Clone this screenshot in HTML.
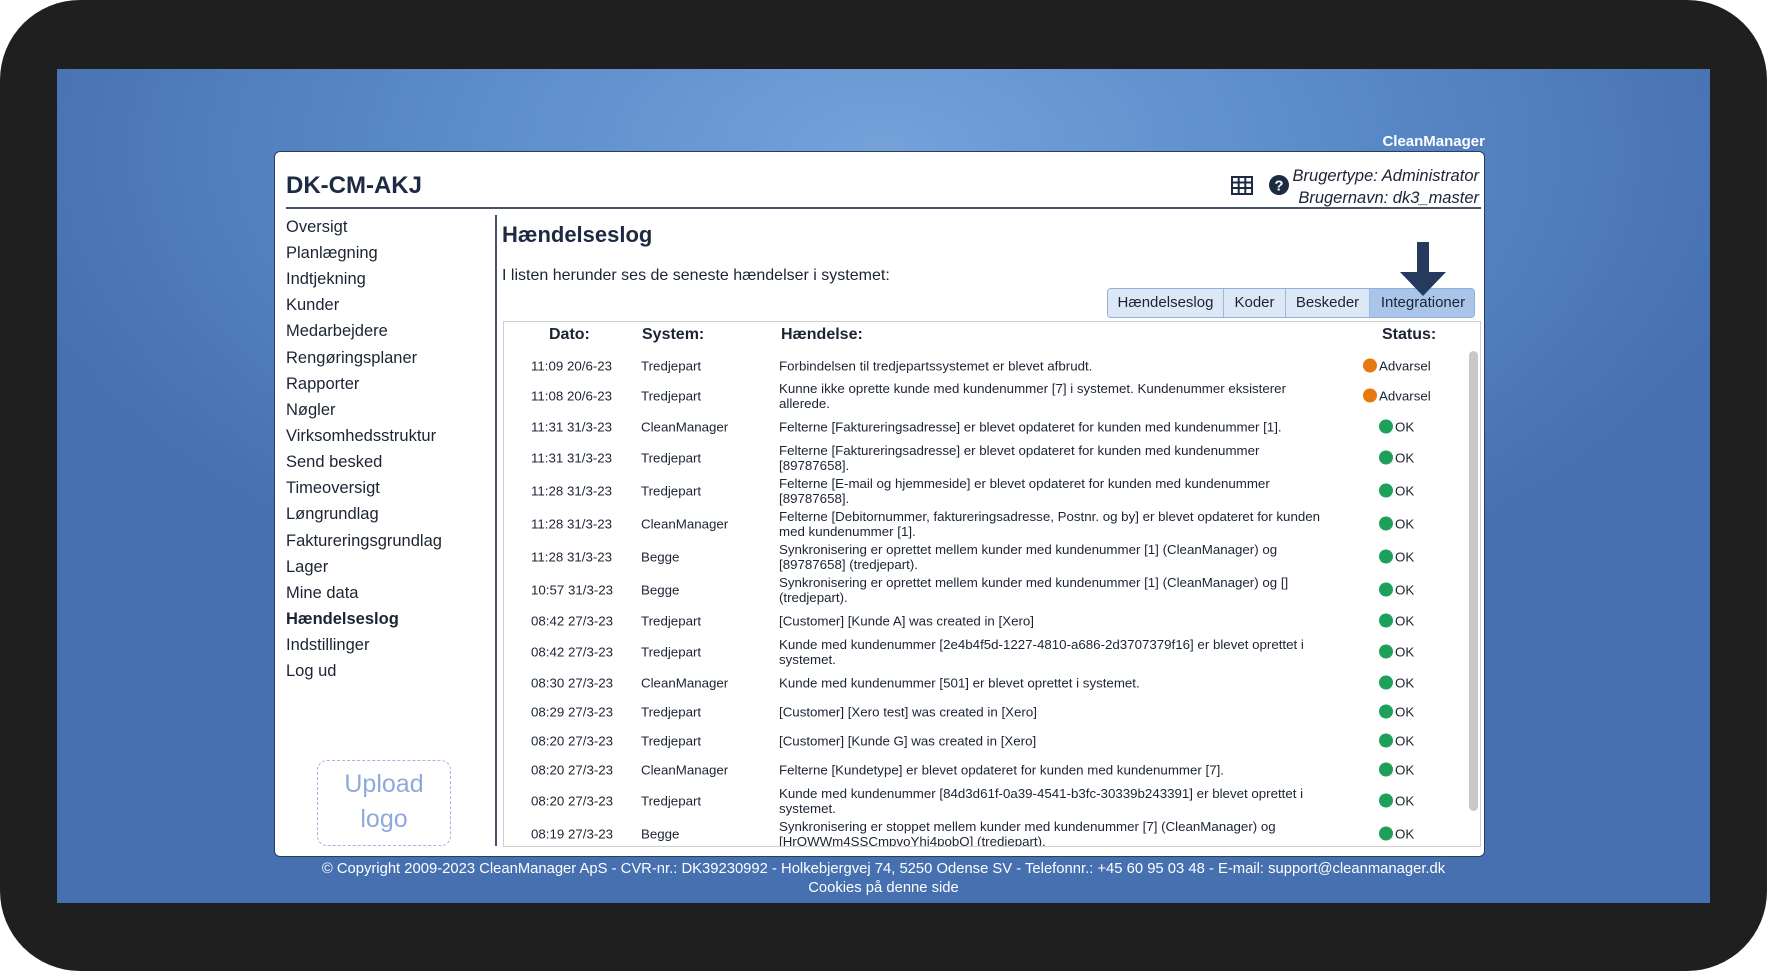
<!DOCTYPE html>
<html><head><meta charset="utf-8"><style>
*{margin:0;padding:0;box-sizing:border-box}
body{width:1767px;height:971px;background:#fff;position:relative;overflow:hidden;font-family:"Liberation Sans",sans-serif;color:#1c2433}
.frame{position:absolute;left:0;top:0;width:1767px;height:971px;background:#1f1f1f;border-radius:80px}
.blue{position:absolute;left:57px;top:69px;width:1653px;height:834px;background:radial-gradient(ellipse 900px 500px at 50% 10%,#74a2d9 0%,#5d8dcb 45%,#4670b0 100%);overflow:hidden}
.panel{position:absolute;left:274px;top:151px;width:1211px;height:706px;background:#fff;border-radius:6px;border:1px solid #2b3d5c}
.abs{position:absolute}
.menu div{position:absolute;left:11px;font-size:16.5px;color:#1c2433}
.row{position:absolute;left:0;width:977px;font-size:13.3px;color:#1c2433}
.row span{position:absolute;transform:translateY(-50%)}
.d{left:27px}.s{left:137px}.e{left:275px;width:556px;line-height:15px}
.st{left:875px;white-space:nowrap}
.st.w{left:859px}
.dot{display:inline-block;width:14px;height:14px;border-radius:50%;vertical-align:-2px;margin-right:2px}
.o{background:#e8790f}.g{background:#1fa05a}
.tab{position:absolute;top:0;height:29px;line-height:28px;font-size:15px;text-align:center;background:#dde8f6;border-right:1px solid #9fb8db;color:#1c2433}
</style></head><body>
<div class="frame"></div>
<div class="blue">
<div class="abs" style="right:225px;top:64px;color:#fff;font-weight:bold;font-size:15px">CleanManager</div>
<div class="abs" style="left:0;right:0;top:791px;text-align:center;color:#fff;font-size:14.8px;line-height:19px">© Copyright 2009-2023 CleanManager ApS - CVR-nr.: DK39230992 - Holkebjergvej 74, 5250 Odense SV - Telefonnr.: +45 60 95 03 48 - E-mail: support@cleanmanager.dk<br>Cookies på denne side</div>
</div>
<div class="panel">
<div class="abs" style="left:11px;top:20px;font-size:24px;font-weight:bold;color:#1c2a42">DK-CM-AKJ</div>
<div class="abs" style="left:11px;top:55px;width:1195px;height:2px;background:#46546b"></div>
<svg class="abs" style="left:956px;top:24px" width="22" height="19" viewBox="0 0 22 19"><rect x="1" y="1" width="20" height="17" fill="none" stroke="#1c2a42" stroke-width="2"/><path d="M1 6.5H21M1 12H21M7.7 1V18M14.3 1V18" stroke="#1c2a42" stroke-width="2"/></svg>
<svg class="abs" style="left:994px;top:23px" width="20" height="20" viewBox="0 0 20 20"><circle cx="10" cy="10" r="10" fill="#1c2a42"/><text x="10" y="15.5" font-size="15" font-weight="bold" text-anchor="middle" fill="#fff" font-family="Liberation Sans">?</text></svg>
<div class="abs" style="right:5px;top:13px;text-align:right;font-style:italic;font-size:16.5px;line-height:22px;color:#1c2433">Brugertype: Administrator<br>Brugernavn: dk3_master</div>
<div class="menu">
<div style="top:66px">Oversigt</div><div style="top:92px">Planlægning</div><div style="top:118px">Indtjekning</div><div style="top:144px">Kunder</div><div style="top:170px">Medarbejdere</div><div style="top:197px">Rengøringsplaner</div><div style="top:223px">Rapporter</div><div style="top:249px">Nøgler</div><div style="top:275px">Virksomhedsstruktur</div><div style="top:301px">Send besked</div><div style="top:327px">Timeoversigt</div><div style="top:353px">Løngrundlag</div><div style="top:380px">Faktureringsgrundlag</div><div style="top:406px">Lager</div><div style="top:432px">Mine data</div><div style="top:458px;font-weight:bold">Hændelseslog</div><div style="top:484px">Indstillinger</div><div style="top:510px">Log ud</div>
</div>
<div class="abs" style="left:42px;top:608px;width:134px;height:86px;border:1.5px dashed #9fb8e0;border-radius:10px;color:#8eaadc;font-size:25px;text-align:center;line-height:35px;padding-top:6px">Upload<br>logo</div>
<div class="abs" style="left:220px;top:63px;width:2px;height:631px;background:#46546b"></div>
<div class="abs" style="left:227px;top:70px;font-size:22px;font-weight:bold;color:#1c2a42">Hændelseslog</div>
<div class="abs" style="left:227px;top:115px;font-size:16px">I listen herunder ses de seneste hændelser i systemet:</div>
<div class="abs" style="left:832px;top:136px;width:368px;height:30px;border:1px solid #8fb0dc;border-radius:4px;overflow:hidden;background:#dde8f6">
<div class="tab" style="left:0;width:116px">Hændelseslog</div>
<div class="tab" style="left:116px;width:62px">Koder</div>
<div class="tab" style="left:178px;width:84px">Beskeder</div>
<div class="tab" style="left:262px;width:106px;background:#a9c5ea;border:none">Integrationer</div>
</div>
<svg class="abs" style="left:1123px;top:90px" width="50" height="54" viewBox="0 0 50 54"><path d="M19 0H31V30H48L25 54L2 30H19Z" fill="#253a5c"/></svg>
<div class="abs" style="left:228px;top:169px;width:978px;height:526px;border:1px solid #cfcfcf;overflow:hidden">
<div class="abs" style="top:4px;left:45px;font-size:16px;font-weight:bold">Dato:</div>
<div class="abs" style="top:4px;left:138px;font-size:16px;font-weight:bold">System:</div>
<div class="abs" style="top:4px;left:277px;font-size:16px;font-weight:bold">Hændelse:</div>
<div class="abs" style="top:4px;left:878px;font-size:16px;font-weight:bold">Status:</div>
<div class="abs" style="left:965px;top:29px;width:9px;height:460px;background:#c8c8c8;border-radius:5px"></div>
<div class="row" style="top:44px"><span class="d">11:09 20/6-23</span><span class="s">Tredjepart</span><span class="e">Forbindelsen til tredjepartssystemet er blevet afbrudt.</span><span class="st w"><i class="dot o"></i>Advarsel</span></div>
<div class="row" style="top:74px"><span class="d">11:08 20/6-23</span><span class="s">Tredjepart</span><span class="e">Kunne ikke oprette kunde med kundenummer [7] i systemet. Kundenummer eksisterer allerede.</span><span class="st w"><i class="dot o"></i>Advarsel</span></div>
<div class="row" style="top:105px"><span class="d">11:31 31/3-23</span><span class="s">CleanManager</span><span class="e">Felterne [Faktureringsadresse] er blevet opdateret for kunden med kundenummer [1].</span><span class="st"><i class="dot g"></i>OK</span></div>
<div class="row" style="top:136px"><span class="d">11:31 31/3-23</span><span class="s">Tredjepart</span><span class="e">Felterne [Faktureringsadresse] er blevet opdateret for kunden med kundenummer<br>[89787658].</span><span class="st"><i class="dot g"></i>OK</span></div>
<div class="row" style="top:169px"><span class="d">11:28 31/3-23</span><span class="s">Tredjepart</span><span class="e">Felterne [E-mail og hjemmeside] er blevet opdateret for kunden med kundenummer<br>[89787658].</span><span class="st"><i class="dot g"></i>OK</span></div>
<div class="row" style="top:202px"><span class="d">11:28 31/3-23</span><span class="s">CleanManager</span><span class="e">Felterne [Debitornummer, faktureringsadresse, Postnr. og by] er blevet opdateret for kunden<br>med kundenummer [1].</span><span class="st"><i class="dot g"></i>OK</span></div>
<div class="row" style="top:235px"><span class="d">11:28 31/3-23</span><span class="s">Begge</span><span class="e">Synkronisering er oprettet mellem kunder med kundenummer [1] (CleanManager) og<br>[89787658] (tredjepart).</span><span class="st"><i class="dot g"></i>OK</span></div>
<div class="row" style="top:268px"><span class="d">10:57 31/3-23</span><span class="s">Begge</span><span class="e">Synkronisering er oprettet mellem kunder med kundenummer [1] (CleanManager) og []<br>(tredjepart).</span><span class="st"><i class="dot g"></i>OK</span></div>
<div class="row" style="top:299px"><span class="d">08:42 27/3-23</span><span class="s">Tredjepart</span><span class="e">[Customer] [Kunde A] was created in [Xero]</span><span class="st"><i class="dot g"></i>OK</span></div>
<div class="row" style="top:330px"><span class="d">08:42 27/3-23</span><span class="s">Tredjepart</span><span class="e">Kunde med kundenummer [2e4b4f5d-1227-4810-a686-2d3707379f16] er blevet oprettet i<br>systemet.</span><span class="st"><i class="dot g"></i>OK</span></div>
<div class="row" style="top:361px"><span class="d">08:30 27/3-23</span><span class="s">CleanManager</span><span class="e">Kunde med kundenummer [501] er blevet oprettet i systemet.</span><span class="st"><i class="dot g"></i>OK</span></div>
<div class="row" style="top:390px"><span class="d">08:29 27/3-23</span><span class="s">Tredjepart</span><span class="e">[Customer] [Xero test] was created in [Xero]</span><span class="st"><i class="dot g"></i>OK</span></div>
<div class="row" style="top:419px"><span class="d">08:20 27/3-23</span><span class="s">Tredjepart</span><span class="e">[Customer] [Kunde G] was created in [Xero]</span><span class="st"><i class="dot g"></i>OK</span></div>
<div class="row" style="top:448px"><span class="d">08:20 27/3-23</span><span class="s">CleanManager</span><span class="e">Felterne [Kundetype] er blevet opdateret for kunden med kundenummer [7].</span><span class="st"><i class="dot g"></i>OK</span></div>
<div class="row" style="top:479px"><span class="d">08:20 27/3-23</span><span class="s">Tredjepart</span><span class="e">Kunde med kundenummer [84d3d61f-0a39-4541-b3fc-30339b243391] er blevet oprettet i<br>systemet.</span><span class="st"><i class="dot g"></i>OK</span></div>
<div class="row" style="top:512px"><span class="d">08:19 27/3-23</span><span class="s">Begge</span><span class="e">Synkronisering er stoppet mellem kunder med kundenummer [7] (CleanManager) og<br>[HrOWWm4SSCmpvoYhi4pobO] (tredjepart).</span><span class="st"><i class="dot g"></i>OK</span></div>
</div>
</div>
</body></html>
